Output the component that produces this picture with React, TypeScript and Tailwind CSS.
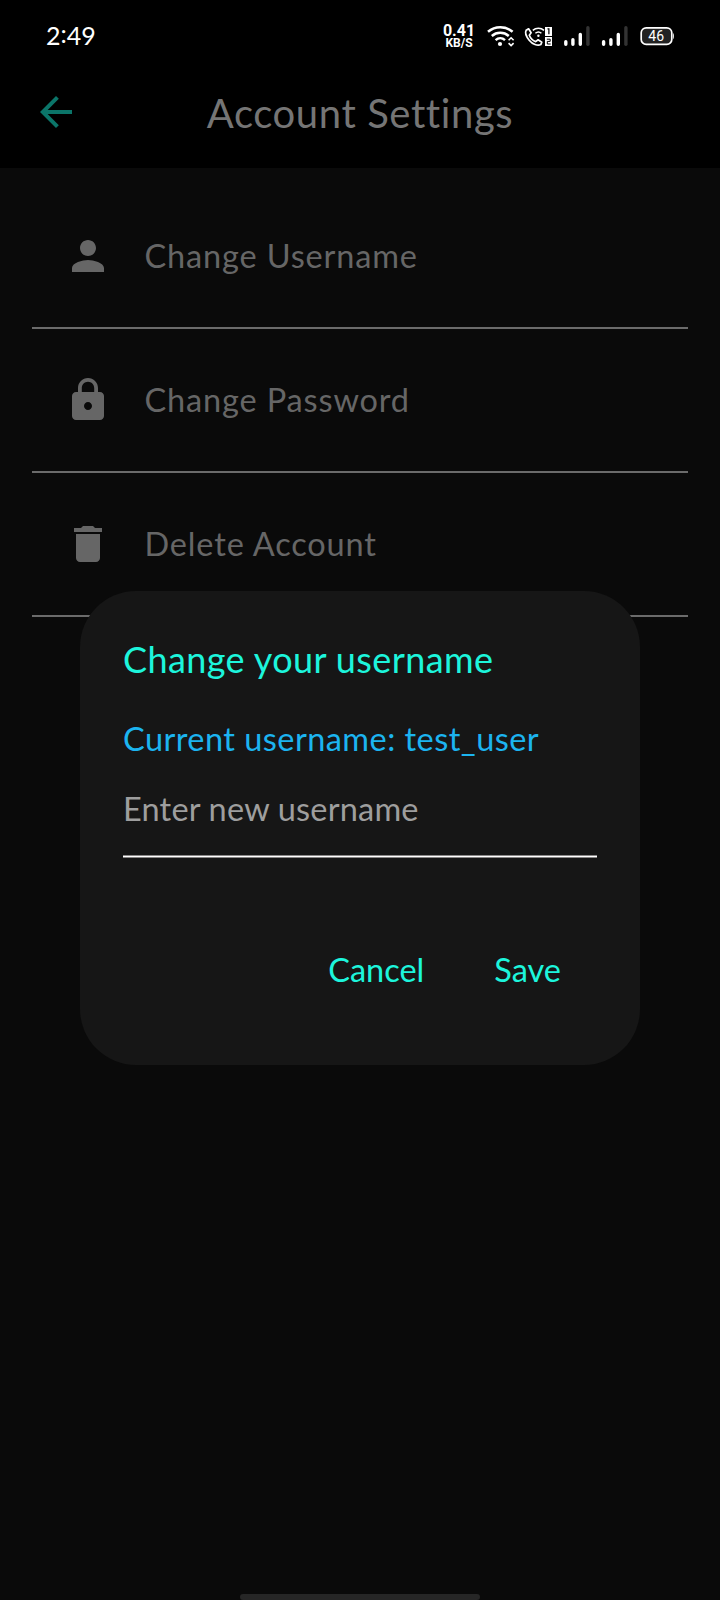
import React from "react";
import { MdArrowBack, MdDelete, MdLock, MdPerson } from "react-icons/md";
import type { IconType } from "react-icons";

const items: { label: string; icon: IconType }[] = [
  { label: "Change Username", icon: MdPerson },
  { label: "Change Password", icon: MdLock },
  { label: "Delete Account", icon: MdDelete },
];

function StatusIcons() {
  return (
    <svg className="block h-[50px] w-[206px]" viewBox="484 10 206 50" fill="none">
      {/* Wi-Fi */}
      <g stroke="#fff" strokeWidth="2.5">
        <path d="M488 31.8a18.6 18.6 0 0 1 24.6 0" />
        <path d="M491.8 36a13 13 0 0 1 17 0" />
        <path d="M495.6 40.1a7.2 7.2 0 0 1 9.4 0" />
      </g>
      <circle cx="500" cy="44" r="2.1" fill="#fff" />
      <path d="M508.6 40.3l2.5-2.5 2.5 2.5M508.6 43.1l2.5 2.5 2.5-2.5" stroke="#fff" strokeWidth="1.6" />
      {/* Wi-Fi calling */}
      <path
        d="M526.2 30.2l2.4-1.4 2.5 4-1.8 2.4c1.2 3.2 3.4 5.2 6.4 6.4l2.4-1.8 3.7 2.4-1 2.4c-3.2 1.7-8.4-.4-11.6-4.4-3-3.6-4.4-7.4-3-10z"
        stroke="#fff"
        strokeWidth="1.7"
        strokeLinejoin="round"
      />
      <path d="M532.8 30.4a8.2 8.2 0 0 1 11.2 0M535.4 33.3a4.6 4.6 0 0 1 6 0" stroke="#fff" strokeWidth="1.5" />
      <circle cx="538.4" cy="35.8" r="1.2" fill="#fff" />
      <rect x="545" y="27" width="7" height="9" fill="#fff" />
      <rect x="545" y="37" width="7" height="9" fill="#fff" />
      <path d="M547.5 28.8h1.4v5.4" stroke="#000" strokeWidth="1.2" />
      <path d="M546.8 39.2h3.4v2.2h-2.9v2.6h3.4" stroke="#000" strokeWidth="1" />
      {/* Signal bars */}
      <g strokeWidth="3.4" strokeLinecap="round">
        <path d="M565.8 41.8v2.4M572.9 39.7v4.5M580.3 34.4v9.8" stroke="#fff" />
        <path d="M587.9 27.8v16.4" stroke="#333" />
        <path d="M603.6 41.8v2.4M610.9 39.7v4.5M618.3 34.4v9.8" stroke="#fff" />
        <path d="M625.9 27.8v16.4" stroke="#333" />
      </g>
      {/* Battery */}
      <rect x="641.2" y="27.8" width="30.6" height="16.6" rx="5" fill="#222" stroke="#fff" strokeWidth="1.7" />
      <path d="M673 33c1.2.8 1.2 5.4 0 6.2z" fill="#fff" />
      <text x="656.2" y="41" fill="#fff" textAnchor="middle" className="font-['Roboto',sans-serif] text-[14px]">46</text>
    </svg>
  );
}

export default function App() {
  return (
    <div className="relative flex h-[1600px] w-[720px] flex-col overflow-hidden bg-[#0a0a0a] font-['Lato',sans-serif]">
      <header className="h-[168px] bg-black">
        <div className="flex h-[60px] items-start justify-between pr-[30px] pl-[46px]">
          <time className="pt-[17px] text-[25px] leading-[36px] text-white">
            2<span className="relative -top-[2px]">:</span>49
          </time>
          <div className="flex pt-[10px]">
            <div className="flex w-[41px] flex-col items-center pt-[13px] font-['Roboto',sans-serif] font-bold text-white">
              <span className="-ml-[9px] text-[16px] leading-[15px] whitespace-nowrap">0.41</span>
              <span className="-ml-[9px] text-[12px] leading-[11px] whitespace-nowrap">KB/S</span>
            </div>
            <StatusIcons />
          </div>
        </div>
        <div className="flex h-[104px] items-center pl-8">
          <MdArrowBack className="size-12 shrink-0 text-[#0b7569]" />
          <h1 className="w-[560px] pt-[1px] text-center text-[40px] leading-[52px] tracking-[0.6px] text-[#757575]">Account Settings</h1>
        </div>
      </header>
      <ul className="px-8 pt-[17px]">
        {items.map(({ label, icon: Icon }) => (
          <li key={label} className="flex h-36 items-center gap-8 border-b-2 border-[#6b6b6b] pl-8 text-[#666]">
            <Icon className="size-12 shrink-0" />
            <span className="pl-[0.5px] text-[32.5px] leading-[40px] tracking-[0.85px]">{label}</span>
          </li>
        ))}
      </ul>

      <div role="dialog" className="absolute top-[591px] left-20 flex h-[473.5px] w-[560px] flex-col rounded-[56px] bg-[#161616] px-[43px] pt-[43px]">
        <h2 className="text-[36px] leading-[50px] tracking-[0.4px] text-[#1df5dc]">Change your username</h2>
        <p className="mt-[35px] text-[32.5px] leading-[40px] tracking-[0.45px] text-[#1cb4f0]">Current username: test_user</p>
        <div className="mt-[22px] flex h-[74px] items-start pt-[8px]">
          <span className="text-[32.5px] leading-[40px] tracking-[0.2px] text-[#9e9e9e]">Enter new username</span>
        </div>
        <div className="h-[3px] border-y border-[#8a8888] bg-white" />
        <div className="mt-[92px] flex justify-end gap-[70px] pr-[36px] text-[32.5px] leading-[40px] text-[#1df5dc]">
          <button>Cancel</button>
          <button>Save</button>
        </div>
      </div>

      <div className="absolute bottom-0 left-[240px] h-[6px] w-60 rounded-[3px] bg-[#262626]" />
    </div>
  );
}
